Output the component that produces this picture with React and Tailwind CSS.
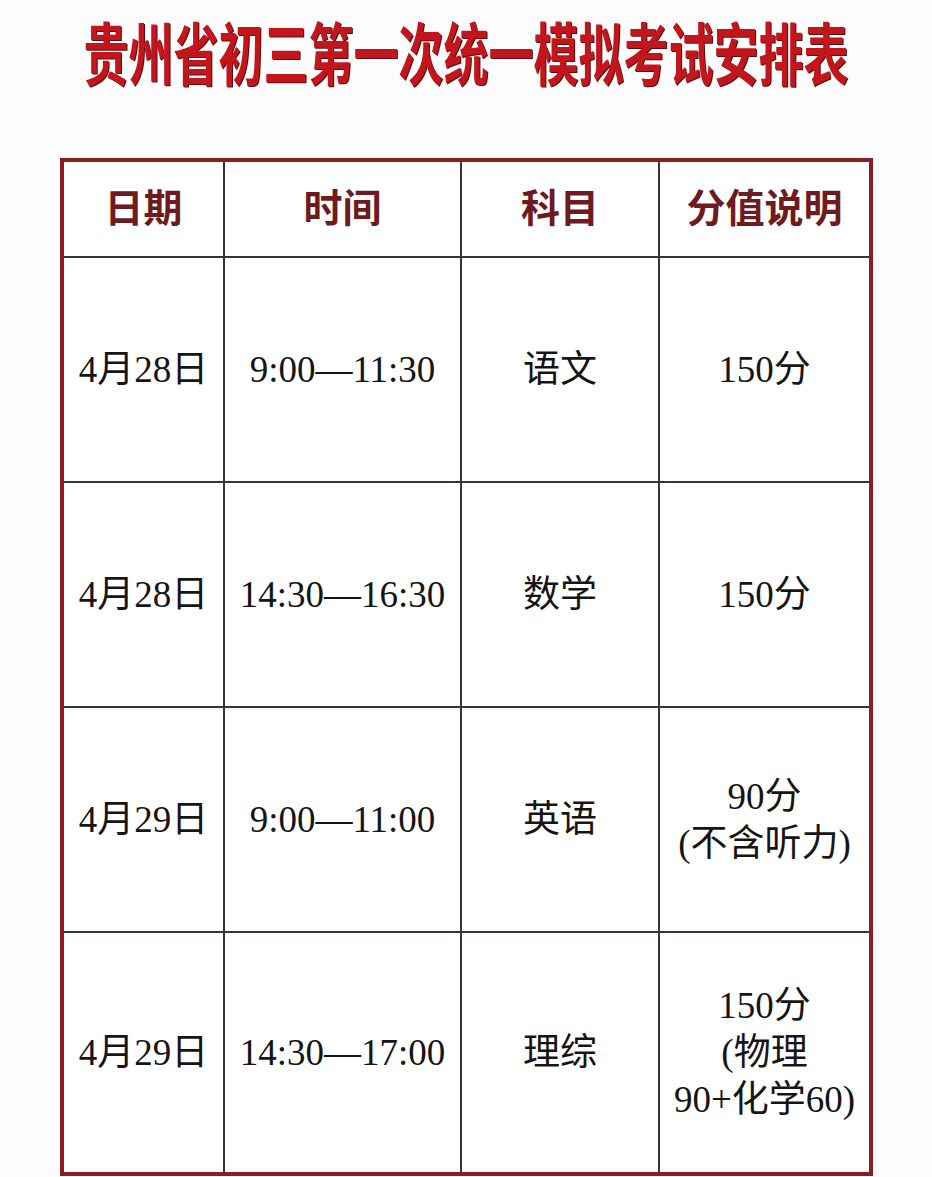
const serif = '[font-family:"Liberation_Serif","Noto_Sans_CJK_SC",serif]';

const rows = [
  { date: '4月28日', time: '9:00—11:30', subject: '语文', score: ['150分'], h: 'h-[225px]' },
  { date: '4月28日', time: '14:30—16:30', subject: '数学', score: ['150分'], h: 'h-[225px]' },
  { date: '4月29日', time: '9:00—11:00', subject: '英语', score: ['90分', '(不含听力)'], h: 'h-[225px]' },
  { date: '4月29日', time: '14:30—17:00', subject: '理综', score: ['150分', '(物理', '90+化学60)'], h: 'h-[239px]' },
];

const cols = 'grid grid-cols-[161px_237px_198px_209px]';

function Cell({ children, last, bottom, className = '' }) {
  return (
    <div
      className={
        'flex flex-col items-center justify-center text-center ' +
        (last ? '' : 'border-r-2 border-r-[#3a3434] ') +
        (bottom ? '' : 'border-b-2 border-b-[#3a3434] ') +
        className
      }
    >
      {children}
    </div>
  );
}

export default function App() {
  return (
    <div className="h-[1177px] w-[932px] overflow-hidden bg-[#fdfcfc]">
      <div className="flex h-[158px] items-start justify-center pt-[16px]">
        <h1
          className='whitespace-nowrap origin-top scale-y-[1.52] text-[45px] leading-[46px] font-bold text-[#c3161c] [font-family:"Noto_Sans_CJK_SC",sans-serif] [text-shadow:1px_1px_0_#5c0b0e]'
        >
          贵州省初三第一次统一模拟考试安排表
        </h1>
      </div>

      <div className="ml-[60px] w-[813px] border-4 border-[#8c1d22] bg-white">
        <div className={cols + ' h-[96px]'}>
          {['日期', '时间', '科目', '分值说明'].map((t, i) => (
            <Cell key={t} last={i === 3} className={serif + ' text-[39px] font-bold text-[#6e1a1e]'}>
              {t}
            </Cell>
          ))}
        </div>
        {rows.map((r, ri) => {
          const bottom = ri === rows.length - 1;
          return (
            <div key={ri} className={cols + ' ' + r.h}>
              <Cell bottom={bottom} className={serif + ' text-[37px] text-[#161414]'}>{r.date}</Cell>
              <Cell bottom={bottom} className={serif + ' text-[37px] text-[#161414]'}>{r.time}</Cell>
              <Cell bottom={bottom} className={serif + ' text-[37px] text-[#161414]'}>{r.subject}</Cell>
              <Cell last bottom={bottom} className={serif + ' text-[37px] leading-[47px] text-[#161414]'}>
                {r.score.map((s) => (
                  <span key={s}>{s}</span>
                ))}
              </Cell>
            </div>
          );
        })}
      </div>
    </div>
  );
}
